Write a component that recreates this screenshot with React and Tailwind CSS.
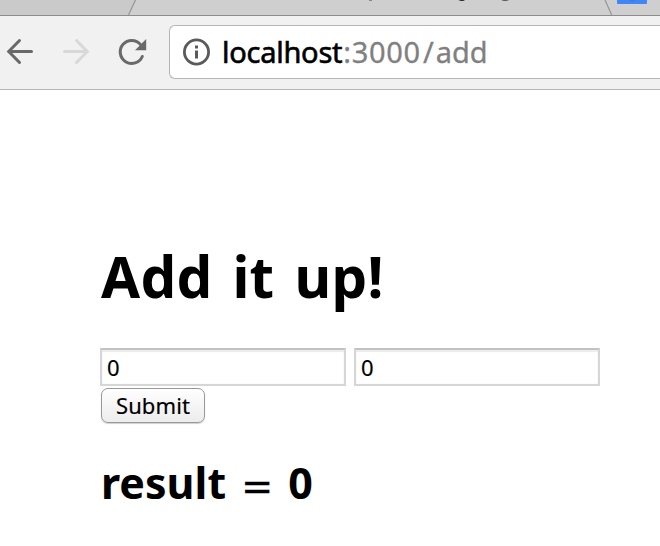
const font = "font-['Noto_Sans','Open_Sans',sans-serif]";

function TabStrip() {
  return (
    <div className="relative h-4 w-full overflow-hidden border-b border-[#8c8c8c] bg-[#cfcfcf]">
      <svg className="block" width="660" height="15" viewBox="0 0 660 15">
        <path d="M0 0H135.5L128.5 15H0Z" fill="#cacaca" />
        <path d="M135.5 0L128.5 15M605 0L611.7 15" stroke="#929292" strokeWidth="1.1" fill="none" />
        <path d="M369 0h3v0.8h-3z" fill="#777" />
        <path d="M458.5 0h6.5q-1 1.1-3 1.1t-3.500-1.1z" fill="#222" />
        <path d="M501.500 0h7.500q-1.500 1.100-4 1.100t-3.500-1.100z" fill="#555" />
        <path d="M617 0h30v3q0 1-1 1h-28q-1 0-1-1z" fill="#4285f4" />
        <path d="M629 0h7l-3.500 2z" fill="#3b7cec" />
      </svg>
    </div>
  );
}

function Toolbar() {
  return (
    <div className="flex h-[74px] items-start border-b border-[#b5b5b5] bg-[#f1f1f1]">
      <svg className="block shrink-0" width="169" height="73" viewBox="0 16 169 73" fill="none" strokeWidth="3" strokeLinecap="round">
        <path d="M19.500 40.500L8.700 51.500L19.500 62.500M9 51.500H31.500" stroke="#696969" />
        <path d="M76.500 40.500L87.300 51.500L76.500 62.500M64.500 51.500H87" stroke="#d8d8d8" />
        <path d="M142.300 56.500A11.500 11.500 0 1 1 140.600 44.600" stroke="#696969" />
        <path d="M146.200 39V50.200H135Z" fill="#696969" />
      </svg>
      <div className="mt-[9px] flex h-[54px] flex-1 items-center rounded-l-[6px] border border-r-0 border-[#b5b5b5] bg-white">
        <svg className="ml-[12px] shrink-0" width="28" height="28" viewBox="0 0 28 28">
          <circle cx="14.500" cy="14" r="12.100" fill="none" stroke="#5a5a5a" strokeWidth="2.800" />
          <path d="M13 7.500h3v3h-3zM13 12.500h3V20.500h-3z" fill="#5a5a5a" />
        </svg>
        <div className={`${font} ml-[12px] whitespace-nowrap text-[29px] leading-[40px] text-[#808080] [-webkit-text-stroke:0.3px]`}>
          <span className="tracking-[-0.25px] text-black [-webkit-text-stroke:0.6px]">localhost</span>
          <span className="ml-px tracking-[0.7px]">:3000</span>
          <span className="mx-[2px]">/</span>
          <span>add</span>
        </div>
      </div>
    </div>
  );
}

function NumberField() {
  return (
    <input
      type="text"
      defaultValue="0"
      className="h-[38px] w-[246px] border-2 border-[#d6d6d6] border-t-[#c2c2c2] bg-white px-[5px] text-[22px] text-black shadow-[inset_0_2px_1px_#ececec,inset_0_0_2px_#eeeeee] outline-none [-webkit-text-stroke:0.2px]"
    />
  );
}

export default function App() {
  return (
    <div className={`${font} h-[546px] w-[660px] overflow-hidden bg-white text-black`}>
      <TabStrip />
      <Toolbar />
      <main className="pl-[100px] pt-[155px]">
        <h1 className="whitespace-nowrap pl-px text-[56.500px] font-bold leading-[64px] tracking-[0.300px] [word-spacing:5px]">Add it up!</h1>
        <form className="mt-[39px]" onSubmit={(e) => e.preventDefault()}>
          <div className="flex gap-2">
            <NumberField />
            <NumberField />
          </div>
          <button className="ml-px mt-[2px] flex h-[35px] w-[104px] items-center justify-center rounded-[7px] border border-[#989898] bg-gradient-to-b from-white via-[#f5f5f5] to-[#ededed] text-[22px] tracking-[0.1px] shadow-[0_1px_1px_#d0d0d0] [-webkit-text-stroke:0.2px]">
            Submit
          </button>
        </form>
        <h2 className="mt-[35px] whitespace-nowrap pl-px text-[43px] font-bold leading-[50px] [word-spacing:4px]">
          result <span className="font-['DejaVu_Sans',sans-serif] text-[38px] font-normal leading-none [-webkit-text-stroke:0.5px]">=</span> 0
        </h2>
      </main>
    </div>
  );
}
